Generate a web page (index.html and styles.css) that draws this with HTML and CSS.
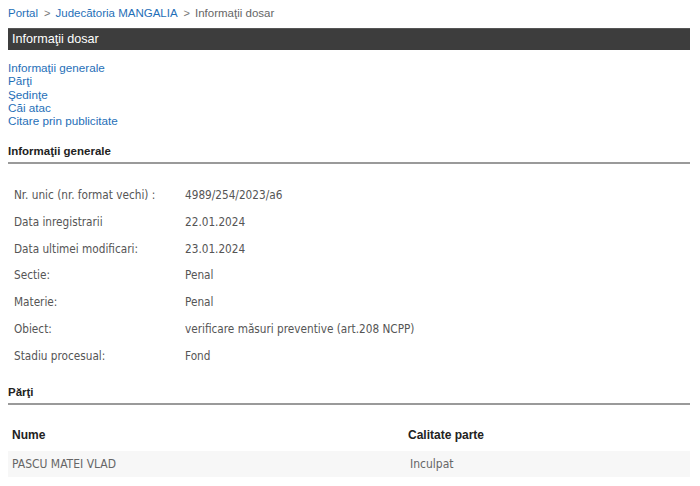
FILE: index.html
```html
<!DOCTYPE html>
<html lang="ro">
<head>
<meta charset="utf-8">
<link rel="stylesheet" href="styles.css">
</head>
<body>
<div class="page">
  <div class="crumbs">
    <a href="#">Portal</a><span class="sep">&gt;</span><a href="#">Judecătoria MANGALIA</a><span class="sep">&gt;</span><span class="cur">Informaţii dosar</span>
  </div>
  <div class="titlebar">Informaţii dosar</div>
  <ul class="toc">
    <li><a href="#">Informaţii generale</a></li>
    <li><a href="#">Părţi</a></li>
    <li><a href="#">Şedinţe</a></li>
    <li><a href="#">Căi atac</a></li>
    <li><a href="#">Citare prin publicitate</a></li>
  </ul>
  <h2 class="section">Informaţii generale</h2>
  <div class="info">
    <div class="irow"><span class="lbl">Nr. unic (nr. format vechi) :</span><span>4989/254/2023/a6</span></div>
    <div class="irow"><span class="lbl">Data inregistrarii</span><span>22.01.2024</span></div>
    <div class="irow"><span class="lbl">Data ultimei modificari:</span><span>23.01.2024</span></div>
    <div class="irow"><span class="lbl">Sectie:</span><span>Penal</span></div>
    <div class="irow"><span class="lbl">Materie:</span><span>Penal</span></div>
    <div class="irow"><span class="lbl">Obiect:</span><span>verificare măsuri preventive (art.208 NCPP)</span></div>
    <div class="irow"><span class="lbl">Stadiu procesual:</span><span>Fond</span></div>
  </div>
  <h2 class="section section2">Părţi</h2>
  <table class="parti">
    <tr class="head"><th class="c1">Nume</th><th class="c2">Calitate parte</th></tr>
    <tr class="row"><td class="c1">PASCU MATEI VLAD</td><td class="c2">Inculpat</td></tr>
  </table>
</div>
</body>
</html>
```
FILE: styles.css
```css
html, body {
  margin: 0;
  padding: 0;
  background: #fff;
}
body {
  font-family: "Liberation Sans", Arial, sans-serif;
  font-size: 12px;
  color: #333;
}
.page {
  width: 682px;
  padding: 0 8px;
}
a {
  color: #1f6fb8;
  text-decoration: none;
}
.crumbs {
  font-size: 11.5px;
  height: 26px;
  line-height: 26px;
  color: #666;
}
.crumbs .sep {
  color: #777;
  margin: 0 5px 0 6px;
  font-size: 11px;
}
.crumbs .cur {
  color: #666;
}
.titlebar {
  margin-top: 2px;
  height: 22px;
  line-height: 21px;
  background: #3d3d3d;
  color: #fff;
  font-size: 12.6px;
  padding-left: 4px;
  border-top: 1px solid #555;
  box-sizing: border-box;
}
.toc {
  list-style: none;
  margin: 11px 0 0;
  padding: 0;
  font-size: 11.7px;
  line-height: 13.3px;
}
.section {
  margin: 17px 0 0;
  font-size: 11.5px;
  font-weight: bold;
  color: #222;
  padding-bottom: 3px;
  border-bottom: 2px solid #9a9a9a;
  line-height: 15px;
}
.info {
  margin-top: 17px;
  font-family: "DejaVu Sans Condensed", "DejaVu Sans", sans-serif;
  font-size: 11.7px;
  color: #555;
}
.irow {
  display: flex;
  align-items: center;
  height: 26.83px;
}
.irow .lbl {
  width: 171px;
  padding-left: 6px;
}
.section2 {
  margin-top: 16px;
}
.parti {
  width: 682px;
  border-collapse: collapse;
  margin-top: 17px;
  font-family: "DejaVu Sans Condensed", "DejaVu Sans", sans-serif;
  font-size: 12px;
}
.parti th {
  text-align: left;
  font-family: "Liberation Sans", Arial, sans-serif;
  font-weight: bold;
  color: #222;
  height: 26px;
  padding: 0 0 3px 4px;
}
.parti .c1 {
  width: 392px;
}
.parti td {
  height: 26px;
  padding: 0 0 0 4px;
  color: #666;
}
.parti td.c2 {
  padding-left: 6px;
}
.parti .row {
  background: #f7f7f7;
}
```
